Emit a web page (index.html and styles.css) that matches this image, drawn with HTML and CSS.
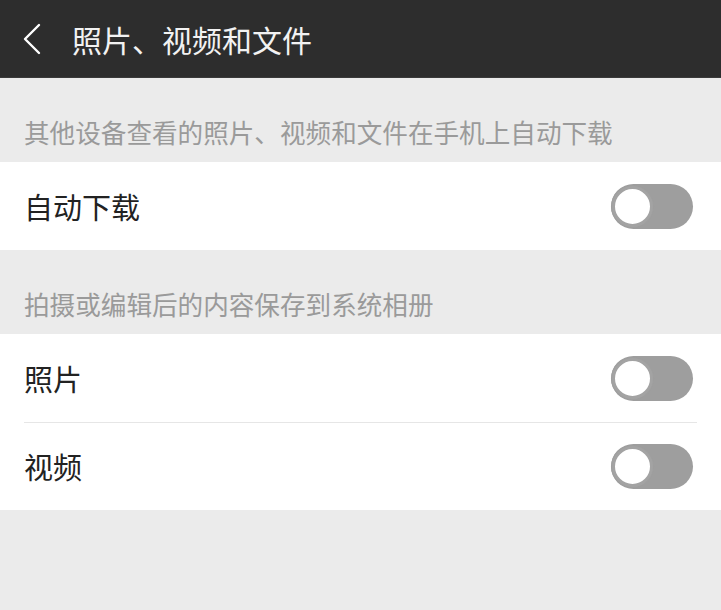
FILE: index.html
```html
<!DOCTYPE html>
<html lang="zh-CN">
<head>
    <meta charset="UTF-8">
    <meta name="viewport" content="width=device-width, initial-scale=1.0">
    <title>照片、视频和文件</title>
    <link rel="stylesheet" href="styles.css">
</head>
<body>
    <div class="topbar">
        <svg class="back" width="20" height="32" viewBox="0 0 20 32">
            <path d="M17 2 L3 16 L17 30" fill="none" stroke="#fff" stroke-width="2.4" stroke-linecap="round" stroke-linejoin="round"/>
        </svg>
        <span class="title">照片、视频和文件</span>
    </div>

    <div class="section-title">其他设备查看的照片、视频和文件在手机上自动下载</div>
    <div class="group">
        <div class="row">
            <span class="label">自动下载</span>
            <span class="switch"><span class="knob"></span></span>
        </div>
    </div>

    <div class="section-title">拍摄或编辑后的内容保存到系统相册</div>
    <div class="group">
        <div class="row">
            <span class="label">照片</span>
            <span class="switch"><span class="knob"></span></span>
        </div>
        <div class="row">
            <span class="label">视频</span>
            <span class="switch"><span class="knob"></span></span>
        </div>
    </div>
</body>
</html>
```

FILE: styles.css
```css
* {
    box-sizing: border-box;
    margin: 0;
    padding: 0;
    font-family: "Noto Sans CJK SC", "Noto Sans", sans-serif;
}

body {
    background: #ebebeb;
    width: 721px;
    height: 610px;
    overflow: hidden;
}

.topbar {
    height: 78px;
    background: #2d2d2d;
    border-bottom: 1px solid #3a3a3a;
    display: flex;
    align-items: center;
    padding-left: 22px;
}

.back {
    margin-right: 30px;
}

.title {
    color: #f2f2f2;
    font-size: 30px;
    line-height: 1;
}

.section-title {
    color: #9a9a9a;
    font-size: 25.6px;
    line-height: 1;
    height: 84px;
    padding: 41px 0 0 24px;
    white-space: nowrap;
}

.group {
    background: #fff;
}

.row {
    height: 88px;
    margin: 0 24px;
    display: flex;
    align-items: center;
    justify-content: space-between;
}

.row + .row {
    border-top: 1px solid #e6e6e6;
}

.label {
    color: #222;
    font-size: 29px;
    line-height: 1;
}

.switch {
    width: 82px;
    height: 45px;
    border-radius: 23px;
    background: #9e9e9e;
    display: flex;
    align-items: center;
    padding-left: 1px;
    margin-right: 4px;
}

.knob {
    width: 41px;
    height: 41px;
    border-radius: 50%;
    background: #fff;
    border: 3px solid #a3a3a3;
    box-shadow: 0 0 0 1px #9e9e9e;
}
```
